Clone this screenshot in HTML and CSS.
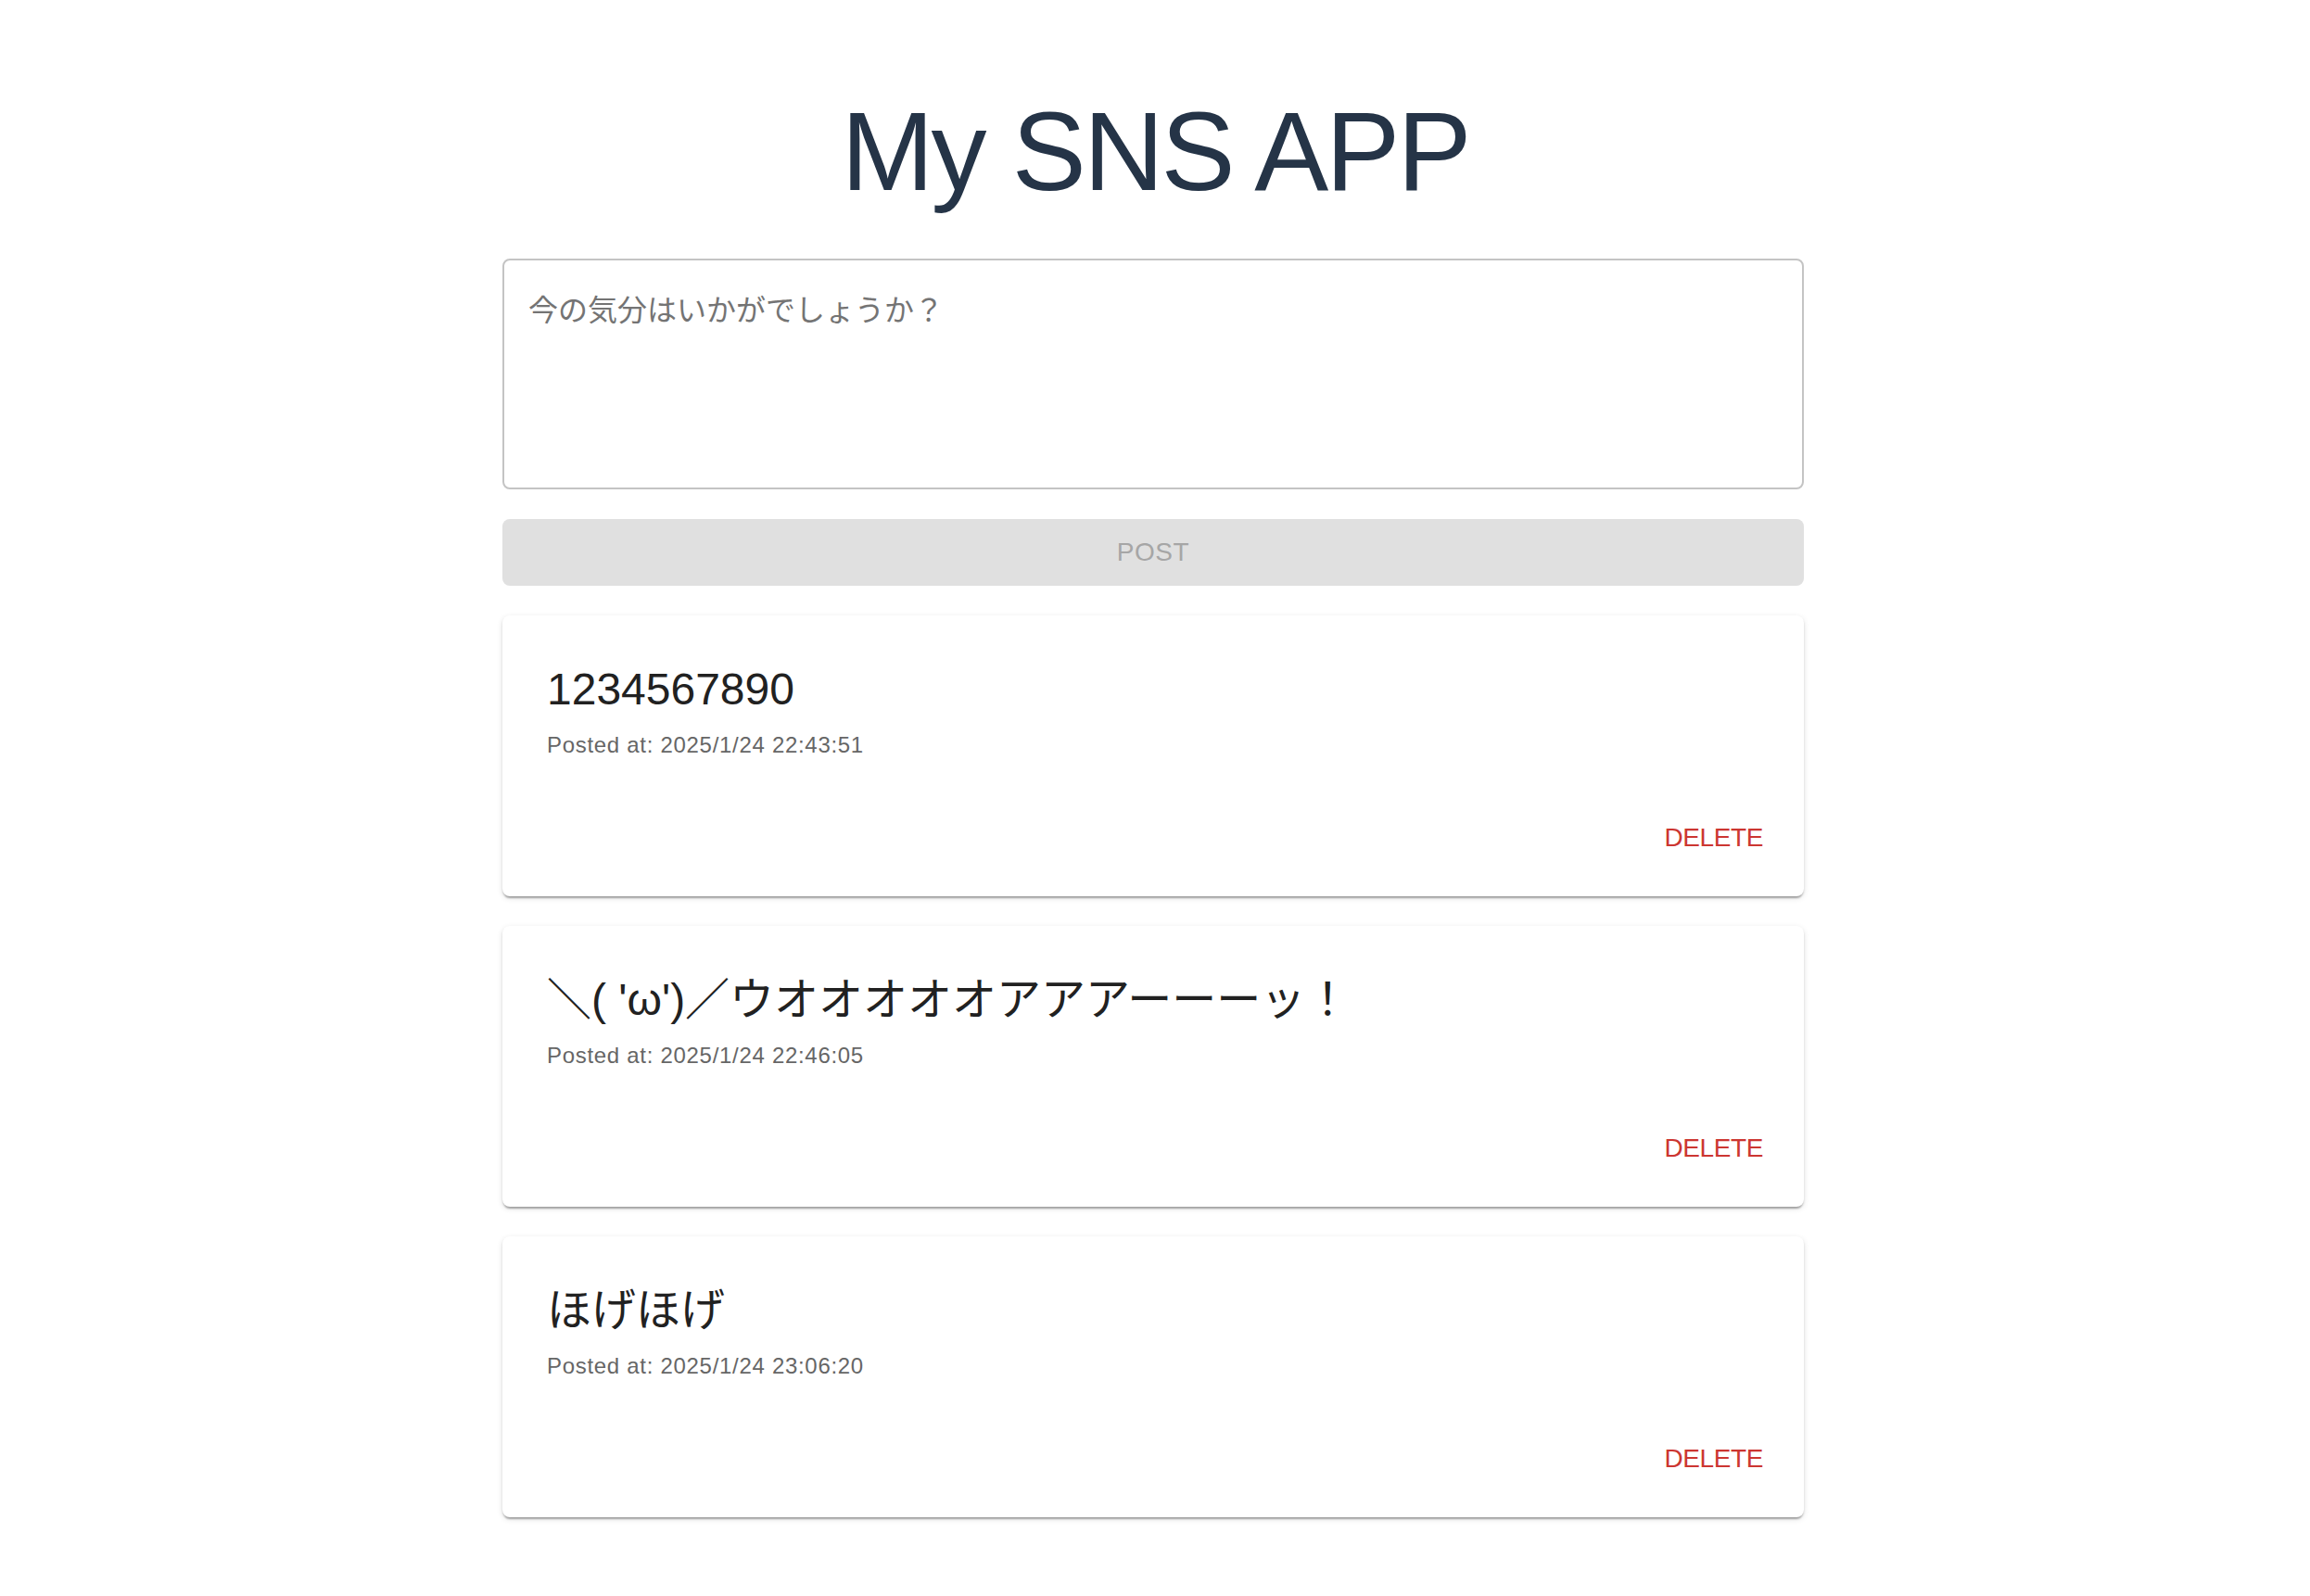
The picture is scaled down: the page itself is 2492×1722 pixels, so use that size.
FILE: index.html
```html
<!DOCTYPE html>
<html lang="ja">
<head>
<meta charset="utf-8">
<title>My SNS APP</title>
<link rel="stylesheet" href="styles.css">
</head>
<body>
<div class="page">
  <h1 class="app-title">My SNS APP</h1>
  <main class="container">
    <div class="text-field">
      <textarea class="text-input" rows="4" placeholder="今の気分はいかがでしょうか？"></textarea>
    </div>
    <button class="post-btn" disabled>Post</button>

    <article class="card">
      <div class="card-content">
        <h2 class="post-text">1234567890</h2>
        <p class="post-meta">Posted at: 2025/1/24 22:43:51</p>
      </div>
      <div class="card-actions">
        <button class="delete-btn">Delete</button>
      </div>
    </article>

    <article class="card">
      <div class="card-content">
        <h2 class="post-text">＼( 'ω')／ウオオオオオアアアーーーッ！</h2>
        <p class="post-meta">Posted at: 2025/1/24 22:46:05</p>
      </div>
      <div class="card-actions">
        <button class="delete-btn">Delete</button>
      </div>
    </article>

    <article class="card">
      <div class="card-content">
        <h2 class="post-text">ほげほげ</h2>
        <p class="post-meta">Posted at: 2025/1/24 23:06:20</p>
      </div>
      <div class="card-actions">
        <button class="delete-btn">Delete</button>
      </div>
    </article>
  </main>
</div>
</body>
</html>
```

FILE: styles.css
```css
* {
  box-sizing: border-box;
}

html, body {
  margin: 0;
  background: #ffffff;
}

body {
  font-family: "Liberation Sans", "Noto Sans CJK JP", sans-serif;
  color: #212121;
}

.page {
  padding: 91px 4px 80px 0;
}

.app-title {
  margin: 0 0 44px;
  font-size: 120px;
  line-height: 144px;
  font-weight: 400;
  letter-spacing: -3px;
  text-align: center;
  color: #253447;
  padding-left: 4px;
}

.container {
  width: 1404px;
  margin: 0 auto;
  display: flex;
  flex-direction: column;
  gap: 32px;
}

.text-field {
  height: 249px;
  border: 2px solid #c4c4c4;
  border-radius: 8px;
  padding: 31px 26px;
  display: flex;
}

.text-input {
  flex: 1;
  border: none;
  outline: none;
  resize: none;
  padding: 0;
  margin: 0;
  font-family: "Liberation Sans", "Noto Sans CJK JP", sans-serif;
  font-size: 32px;
  line-height: 46px;
  color: #212121;
  background: transparent;
}

.text-input::placeholder {
  color: #747474;
  opacity: 1;
}

.post-btn {
  height: 72px;
  border: none;
  border-radius: 8px;
  background: #e0e0e0;
  color: #a6a6a6;
  font-family: "Liberation Sans", sans-serif;
  font-size: 28px;
  font-weight: 400;
  letter-spacing: 0.6px;
  text-transform: uppercase;
  padding: 0;
}

.card {
  background: #ffffff;
  border-radius: 8px;
  box-shadow: 0 4px 2px -2px rgba(0, 0, 0, 0.2),
              0 2px 2px 0 rgba(0, 0, 0, 0.14),
              0 2px 6px 0 rgba(0, 0, 0, 0.12);
}

.card-content {
  padding: 48px 48px 0;
}

.post-text {
  margin: 0 0 8px;
  height: 64px;
  font-size: 48px;
  line-height: 64px;
  font-weight: 400;
  color: #212121;
  white-space: nowrap;
}

.post-meta {
  margin: 0;
  font-size: 24px;
  line-height: 40px;
  letter-spacing: 0.7px;
  color: #666666;
}

.card-actions {
  display: flex;
  justify-content: flex-end;
  padding: 43px 28px 27px;
}

.delete-btn {
  border: none;
  background: transparent;
  padding: 12px 16px;
  font-family: "Liberation Sans", sans-serif;
  font-size: 28px;
  line-height: 49px;
  letter-spacing: -0.4px;
  text-transform: uppercase;
  color: #cc3631;
  border-radius: 8px;
}
```
